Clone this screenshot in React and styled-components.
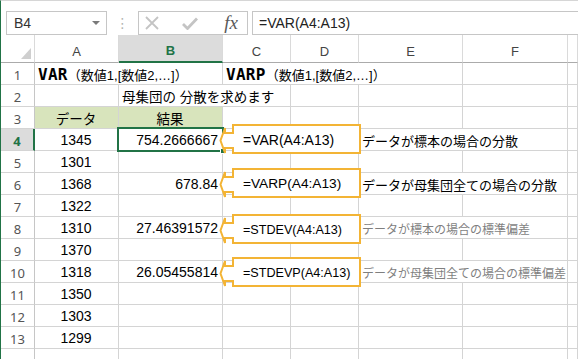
import React from 'react';
import styled, { createGlobalStyle } from 'styled-components';

const GREEN = '#217346';
const CALLOUT = '#F3B435';

const columns = [ 'A', 'B', 'C', 'D', 'E', 'F', '' ];

function FnTitle( { name } ) {
	return (
		<>
			<TitleName>{ name }</TitleName>
			<TitleArgs>（数値1,[数値2,…]）</TitleArgs>
		</>
	);
}

const num = ( value ) => ( { align: 'center', content: value } );
const result = ( value, extra = {} ) => ( { align: 'right', content: value, ...extra } );
const note = ( text, muted ) => ( { span: 2, kind: muted ? 'muted' : 'note', content: text } );

const rows = [
	[ { span: 2, content: <FnTitle name="VAR" /> }, { span: 3, content: <FnTitle name="VARP" /> }, {}, {} ],
	[ {}, { span: 2, kind: 'jp', content: '母集団の 分散を求めます' }, {}, {}, {}, {} ],
	[ { fill: true, align: 'center', kind: 'jp', content: 'データ' }, { fill: true, align: 'center', kind: 'jp', content: '結果' }, {}, {}, {}, {}, {} ],
	[ num( '1345' ), result( '754.2666667', { selected: true } ), {}, {}, note( 'データが標本の場合の分散' ), {} ],
	[ num( '1301' ), {}, {}, {}, {}, {}, {} ],
	[ num( '1368' ), result( '678.84' ), {}, {}, note( 'データが母集団全ての場合の分散' ), {} ],
	[ num( '1322' ), {}, {}, {}, {}, {}, {} ],
	[ num( '1310' ), result( '27.46391572' ), {}, {}, note( 'データが標本の場合の標準偏差', true ), {} ],
	[ num( '1370' ), {}, {}, {}, {}, {}, {} ],
	[ num( '1318' ), result( '26.05455814' ), {}, {}, note( 'データが母集団全ての場合の標準偏差', true ), {} ],
	[ num( '1350' ), {}, {}, {}, {}, {}, {} ],
	[ num( '1303' ), {}, {}, {}, {}, {}, {} ],
	[ num( '1299' ), {}, {}, {}, {}, {}, {} ],
	[ {}, {}, {}, {}, {}, {}, {} ],
];

// shapes floating over the sheet, with the font size each one shows
const callouts = [
	{ top: 89, size: 14, formula: '=VAR(A4:A13)' },
	{ top: 133, size: 13.7, formula: '=VARP(A4:A13)' },
	{ top: 179, size: 12.6, formula: '=STDEV(A4:A13)' },
	{ top: 222, size: 12.6, formula: '=STDEVP(A4:A13)' },
];

export default function App() {
	return (
		<>
			<GlobalStyle />
			<Window>
				<FormulaBar>
					<NameBox>
						B4
						<DropArrow />
					</NameBox>
					<Grip>⋮</Grip>
					<ButtonGroup>
						<ButtonSlot $width={ 26 }>
							<svg width="14" height="14" viewBox="0 0 14 14">
								<path d="M1 1 L13 13 M13 1 L1 13" stroke="#C4C4C4" strokeWidth="1.8" fill="none" />
							</svg>
						</ButtonSlot>
						<ButtonSlot $width={ 50 }>
							<svg width="16" height="13" viewBox="0 0 16 13">
								<path d="M1 7 L5.5 11.5 L15 1.5" stroke="#C4C4C4" strokeWidth="2.8" fill="none" />
							</svg>
						</ButtonSlot>
						<ButtonSlot $width={ 32 }>
							<FxLabel>fx</FxLabel>
						</ButtonSlot>
					</ButtonGroup>
					<FormulaInput>=VAR(A4:A13)</FormulaInput>
				</FormulaBar>

				<Sheet>
					<Corner>
						<svg width="10" height="11" viewBox="0 0 10 11">
							<path d="M10 0 L10 11 L0 11 Z" fill="#CFCFCF" />
						</svg>
					</Corner>
					{ columns.map( ( col ) => (
						<ColHeader key={ col || 'G' } $active={ col === 'B' }>
							{ col }
						</ColHeader>
					) ) }

					{ rows.map( ( cells, r ) => (
						<React.Fragment key={ r }>
							<RowHeader $active={ r === 3 }>{ r < 13 ? r + 1 : '' }</RowHeader>
							{ cells.map( ( cell, c ) => (
								<Cell
									key={ c }
									$span={ cell.span || 1 }
									$align={ cell.align }
									$fill={ cell.fill }
									$kind={ cell.kind }
									$selected={ cell.selected }
								>
									{ cell.content }
								</Cell>
							) ) }
						</React.Fragment>
					) ) }

					{ callouts.map( ( item ) => (
						<Callout key={ item.formula } $top={ item.top }>
							<svg width="143" height="31" viewBox="0 0 143 31">
								<path
									d="M14 1 H141 V29 H14 V24 H6 V29 L1.5 16.5 L6 4 V9 H14 Z"
									fill="#fff"
									stroke={ CALLOUT }
									strokeWidth="2"
									strokeLinejoin="miter"
								/>
							</svg>
							<CalloutText $size={ item.size }>{ item.formula }</CalloutText>
						</Callout>
					) ) }
				</Sheet>
			</Window>
		</>
	);
}

const GlobalStyle = createGlobalStyle`
	body {
		margin: 0;
		background: #fff;
		font-family: "Liberation Sans", "Noto Sans CJK JP", sans-serif;
	}
`;

const Window = styled.div`
	box-sizing: border-box;
	width: 578px;
	height: 359px;
	overflow: hidden;
	background: #fff;
	border-left: 1px solid ${ GREEN };
	border-top: 1px solid #d6d6d6;
`;

const FormulaBar = styled.div`
	display: flex;
	align-items: flex-start;
	height: 34px;
	padding: 10px 0 0 5px;
	box-sizing: border-box;
`;

const NameBox = styled.div`
	position: relative;
	box-sizing: border-box;
	width: 101px;
	height: 24px;
	border: 1px solid #c6c6c6;
	padding-left: 7px;
	display: flex;
	align-items: center;
	font-size: 14px;
	color: #333;
`;

const DropArrow = styled.span`
	position: absolute;
	right: 6px;
	top: 9px;
	border-left: 4px solid transparent;
	border-right: 4px solid transparent;
	border-top: 4px solid #7a7a7a;
`;

const Grip = styled.div`
	width: 31px;
	height: 24px;
	display: flex;
	align-items: center;
	justify-content: center;
	color: #b4b4b4;
	font-size: 14px;
	font-family: "DejaVu Sans", sans-serif;
`;

const ButtonGroup = styled.div`
	box-sizing: border-box;
	display: flex;
	width: 110px;
	height: 24px;
	border: 1px solid #c6c6c6;
`;

const ButtonSlot = styled.div`
	width: ${ ( p ) => p.$width }px;
	display: flex;
	align-items: center;
	justify-content: center;
`;

const FxLabel = styled.span`
	font-family: "Liberation Serif", serif;
	font-style: italic;
	font-size: 19px;
	color: #595959;
	line-height: 1;
	margin-top: -1px;
`;

const FormulaInput = styled.div`
	box-sizing: border-box;
	flex: 1;
	height: 24px;
	margin-left: 4px;
	margin-right: -2px;
	border: 1px solid #c6c6c6;
	padding-left: 6px;
	display: flex;
	align-items: center;
	font-size: 14px;
	color: #222;
`;

const Sheet = styled.div`
	position: relative;
	display: grid;
	grid-template-columns: 34px 84px 104px 68px 68px 104px 105px 1fr;
	grid-template-rows: 28px;
	grid-auto-rows: 22px;
`;

const Corner = styled.div`
	box-sizing: border-box;
	border-right: 1px solid #dadada;
	border-bottom: 1px solid #ababab;
	display: flex;
	align-items: flex-end;
	justify-content: flex-end;
	padding: 0 3px 3px 0;
`;

const ColHeader = styled.div`
	box-sizing: border-box;
	display: flex;
	align-items: center;
	justify-content: center;
	padding-top: 5px;
	font-size: 13px;
	background: ${ ( p ) => ( p.$active ? '#dcdcdc' : '#fff' ) };
	color: ${ ( p ) => ( p.$active ? GREEN : '#444' ) };
	font-weight: ${ ( p ) => ( p.$active ? 'bold' : 'normal' ) };
	border-right: 1px solid #dadada;
	border-bottom: ${ ( p ) => ( p.$active ? `2px solid ${ GREEN }` : '1px solid #ababab' ) };
`;

const RowHeader = styled.div`
	box-sizing: border-box;
	display: flex;
	align-items: center;
	justify-content: center;
	padding-top: 3px;
	font-size: 13px;
	font-family: "Noto Sans", "Liberation Sans", sans-serif;
	background: ${ ( p ) => ( p.$active ? '#dcdcdc' : '#fff' ) };
	color: ${ ( p ) => ( p.$active ? GREEN : '#555' ) };
	font-weight: ${ ( p ) => ( p.$active ? 'bold' : 'normal' ) };
	border-right: ${ ( p ) => ( p.$active ? `2px solid ${ GREEN }` : '1px solid #c6c6c6' ) };
	border-bottom: 1px solid #d4d4d4;
`;

const kindFont = {
	jp: 'font-size: 13.5px;',
	note: 'font-size: 13px;',
	muted: 'font-size: 12px; color: #7f7f7f;',
};

const Cell = styled.div`
	position: relative;
	box-sizing: border-box;
	grid-column: span ${ ( p ) => p.$span };
	display: flex;
	align-items: center;
	justify-content: ${ ( p ) =>
		p.$align === 'center' ? 'center' : p.$align === 'right' ? 'flex-end' : 'flex-start' };
	padding: 1px 4px 0 3px;
	white-space: nowrap;
	font-size: 14px;
	color: #000;
	background: ${ ( p ) => ( p.$fill ? '#d8e4bc' : 'transparent' ) };
	border-right: 1px solid #d4d4d4;
	border-bottom: 1px solid #d4d4d4;
	${ ( p ) => kindFont[ p.$kind ] || '' }
	${ ( p ) =>
		p.$selected &&
		`
		z-index: 1;
		&::after {
			content: '';
			position: absolute;
			inset: -2px;
			border: 2px solid ${ GREEN };
		}
		&::before {
			content: '';
			position: absolute;
			right: -4px;
			bottom: -4px;
			width: 4px;
			height: 4px;
			background: ${ GREEN };
			border: 1px solid #fff;
			z-index: 1;
		}
	` }
`;

const TitleName = styled.span`
	font-family: "DejaVu Sans Mono", monospace;
	font-weight: bold;
	font-size: 16px;
	letter-spacing: 0.3px;
`;

const TitleArgs = styled.span`
	font-size: 13px;
`;

const Callout = styled.div`
	position: absolute;
	left: 218px;
	top: ${ ( p ) => p.$top }px;
	width: 143px;
	height: 31px;
	z-index: 3;

	svg {
		display: block;
	}
`;

const CalloutText = styled.div`
	position: absolute;
	left: 14px;
	top: 0;
	height: 31px;
	padding-left: 10px;
	display: flex;
	align-items: center;
	font-size: ${ ( p ) => p.$size }px;
	color: #000;
	white-space: nowrap;
`;
